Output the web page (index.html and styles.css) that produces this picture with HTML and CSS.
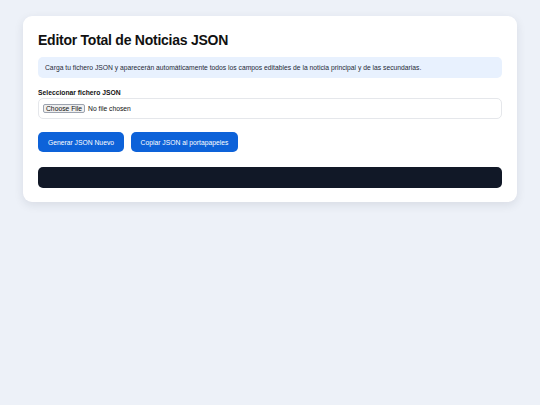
FILE: index.html
```html
<!DOCTYPE html>
<html lang="es">
<head>
<meta charset="utf-8">
<title>Editor Total de Noticias JSON</title>
<link rel="stylesheet" href="styles.css">
</head>
<body>
<main class="card">
  <h1 class="title">Editor Total de Noticias JSON</h1>
  <p class="info">Carga tu fichero JSON y aparecerán automáticamente todos los campos editables de la noticia principal y de las secundarias.</p>
  <label class="label" for="file">Seleccionar fichero JSON</label>
  <div class="file-box"><input id="file" class="file" type="file" accept=".json"></div>
  <div class="actions">
    <button class="btn btn-gen" type="button">Generar JSON Nuevo</button>
    <button class="btn btn-copy" type="button">Copiar JSON al portapapeles</button>
  </div>
  <pre class="output"></pre>
</main>
</body>
</html>
```
FILE: styles.css
```css
html, body {
  margin: 0;
  padding: 0;
}
body {
  background: #edf1f8;
  font-family: "Liberation Sans", Arial, sans-serif;
  color: #111827;
  padding: 16px 23px;
}
.card {
  background: #ffffff;
  border-radius: 9px;
  box-shadow: 0 3px 10px rgba(30, 41, 59, 0.10);
  padding: 15px 15px 14px;
  width: 464px;
}
.title {
  margin: 0 0 8px;
  font-size: 14px;
  letter-spacing: -0.25px;
  line-height: 18px;
  font-weight: 700;
  color: #111111;
}
.info {
  margin: 0 0 10px;
  background: #e8f1fe;
  border-radius: 5px;
  padding: 0 7px;
  height: 21px;
  line-height: 21px;
  font-size: 6.75px;
  color: #1f2937;
}
.label {
  display: block;
  font-size: 6.75px;
  font-weight: 700;
  line-height: 9px;
  margin: 0 0 1px;
  color: #111;
}
.file-box {
  border: 1px solid #e5e7eb;
  border-radius: 5px;
  height: 19px;
  display: flex;
  align-items: center;
  padding: 0 4px;
}
.file {
  font-size: 6.75px;
  font-family: "Liberation Sans", Arial, sans-serif;
  color: #111;
}
.file::file-selector-button {
  font-family: "Liberation Sans", Arial, sans-serif;
  font-size: 6.75px;
  height: 9px;
  line-height: 7px;
  padding: 0 2px;
  margin: 0 3px 0 0;
  border: 1px solid #9ca3af;
  border-radius: 2px;
  background: #efefef;
  color: #111;
}
.actions {
  display: flex;
  gap: 7px;
  margin-top: 13px;
}
.btn {
  border: 0;
  border-radius: 5px;
  background: #0d62d9;
  color: #ffffff;
  font-family: "Liberation Sans", Arial, sans-serif;
  font-size: 6.75px;
  height: 20px;
  padding: 0;
}
.btn-gen { width: 86px; }
.btn-copy { width: 107px; }
.output {
  margin: 15px 0 0;
  height: 21px;
  background: #111827;
  border-radius: 5px;
}
```
